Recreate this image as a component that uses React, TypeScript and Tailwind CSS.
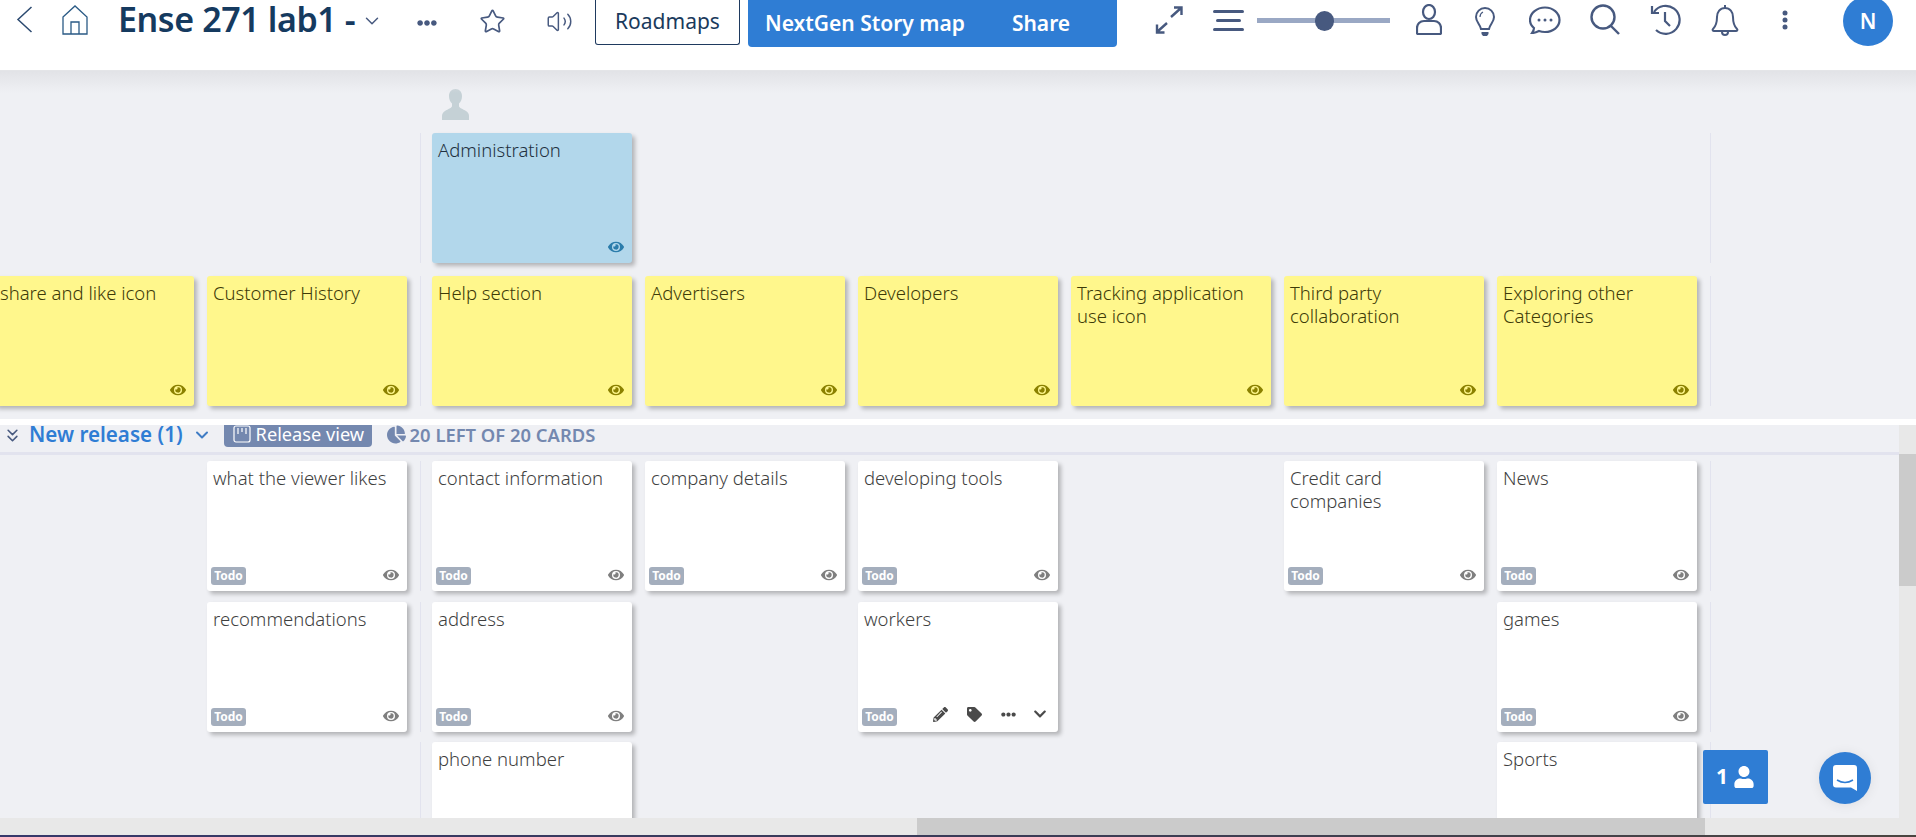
import { ChevronDown, ChevronsDown, Star, Volume2 } from "lucide-react";
import { FaEllipsisH, FaEye, FaPencilAlt, FaTag, FaUser, FaChevronDown, FaChartPie } from "react-icons/fa";

const font = "font-['Noto_Sans','Open_Sans',sans-serif]";

type CardData = { title: string; hovered?: boolean } | null;

function Card({ title, tone, hovered }: { title: string; tone: "blue" | "yellow" | "white"; hovered?: boolean }) {
  const bg = tone === "blue" ? "bg-[#b2d7eb]" : tone === "yellow" ? "bg-[#fff78c]" : "bg-white";
  const eye = tone === "blue" ? "text-[#2b7cab]" : tone === "yellow" ? "text-[#8b8100]" : "text-[#7f7f7f]";
  const ink = tone === "blue" ? "text-[#1f3140]" : tone === "yellow" ? "text-[#3d3a08]" : "text-[#3f3f3f]";
  return (
    <div className={`relative flex h-[130px] w-[200px] shrink-0 flex-col rounded-[3px] pt-[5px] pr-[8px] pl-[6px] shadow-[3px_3px_4px_rgba(0,0,0,0.25)] ${bg}`}>
      <div className={`text-[18.5px] leading-[23px] font-light ${ink}`}>{title}</div>
      {tone === "white" && (
        <div className="absolute bottom-[6px] left-[4px] flex h-[18px] w-[35px] items-center justify-center rounded-[3px] bg-[#a4aebd] text-[12px] font-bold text-white">Todo</div>
      )}
      {hovered ? (
        <div className="absolute right-[11px] bottom-[10px] flex items-center text-[#4a4a4a]">
          <FaPencilAlt className="mr-[19px] text-[15px]" />
          <FaTag className="mr-[19px] text-[15px]" />
          <FaEllipsisH className="mr-[17px] text-[15px]" />
          <FaChevronDown className="text-[14px]" />
        </div>
      ) : (
        <FaEye className={`absolute right-[8px] bottom-[8px] text-[16px] ${eye}`} />
      )}
    </div>
  );
}

function Row({ cards, tone, className = "" }: { cards: CardData[]; tone: "blue" | "yellow" | "white"; className?: string }) {
  const slot = (c: CardData, i: number) =>
    c ? <Card key={i} title={c.title} tone={tone} hovered={c.hovered} /> : <div key={i} className="w-[200px] shrink-0" />;
  return (
    <div className={`ml-[-6px] flex w-max ${className}`}>
      <div className="flex gap-[13px] border-r border-[#e2e3ee] pr-[13px]">{cards.slice(0, 2).map(slot)}</div>
      <div className="flex gap-[13px] border-r border-[#e2e3ee] pr-[13px] pl-[11px]">{cards.slice(2).map((c, i) => slot(c, i + 2))}</div>
    </div>
  );
}

const t = (title: string, hovered?: boolean): CardData => ({ title, hovered });

function TopBar() {
  return (
    <div className="relative z-10 flex h-[71px] shrink-0 items-start border-b border-[#e4e5e8] bg-white text-[#47597f]">
      <svg className="mt-[6px] ml-[16px] h-[27px] w-[17px] text-[#2c4a70]" viewBox="0 0 17 27" fill="none" stroke="currentColor" strokeWidth="1.5">
        <path d="M15.500 1 2 13.500 15.500 26" />
      </svg>
      <svg className="mt-[5px] ml-[29px] h-[30px] w-[26px] text-[#2a5a85]" viewBox="0 0 26 30" fill="none" stroke="currentColor" strokeWidth="1.3">
        <path d="M1 12 13 1l12 11v17H1zM9 29V17h8v12" />
      </svg>
      <div className="ml-[30px] w-[238px] text-[34px] leading-[38px] font-semibold tracking-[-0.4px] whitespace-nowrap text-[#153a5f]">Ense 271 lab1 -</div>
      <ChevronDown className="mt-[10px] ml-[5px] h-[22px] w-[22px] text-[#47597f]" strokeWidth={1.6} />
      <FaEllipsisH className="mt-[13px] ml-[34px] h-[20px] w-[20px]" />
      <Star className="mt-[8px] ml-[42px] h-[27px] w-[27px]" strokeWidth={1.5} />
      <Volume2 className="mt-[8px] ml-[40px] h-[27px] w-[27px]" strokeWidth={1.3} />
      <div className="ml-[22px] flex h-[45px] w-[145px] items-center justify-center rounded-b-[3px] border border-t-0 border-[#1f3a5f] text-[21px] text-[#1a3a5c]">Roadmaps</div>
      <div className="ml-[8px] flex h-[47px] w-[369px] items-center rounded-b-[4px] bg-[#2f7dd4] text-[21px] font-semibold text-white">
        <span className="ml-[17px] whitespace-nowrap">NextGen Story map</span>
        <span className="ml-[47px]">Share</span>
      </div>
      <svg className="mt-[6px] ml-[38px] h-[28px] w-[28px]" viewBox="0 0 28 28" fill="none" stroke="currentColor" strokeWidth="2.4">
        <path d="M16 11 26 2M19 1.500h7.500V9M12 17 2 26M2 18.500V26.500h7.500" />
      </svg>
      <div className="mt-[10px] ml-[30px] flex w-[31px] flex-col items-stretch gap-[6px]">
        <div className="h-[3px] rounded bg-[#47597f]" />
        <div className="mx-[3px] h-[3px] rounded bg-[#47597f]" />
        <div className="h-[3px] rounded bg-[#47597f]" />
      </div>
      <div className="relative mt-[18px] ml-[13px] h-[5px] w-[133px] bg-[#9aa8c4]">
        <div className="absolute top-[-7px] left-[58px] h-[20px] w-[19px] rounded-full bg-[#47597f]" />
      </div>
      <svg className="mt-[4px] ml-[26px] h-[31px] w-[26px]" viewBox="0 0 26 31" fill="none" stroke="currentColor" strokeWidth="2.2">
        <ellipse cx="13" cy="8" rx="6" ry="7" />
        <path d="M8 17h10c4 0 7 3 7 7v5a1 1 0 0 1-1 1H2a1 1 0 0 1-1-1v-5c0-4 3-7 7-7z" />
      </svg>
      <svg className="mt-[7px] ml-[33px] h-[29px] w-[20px]" viewBox="0 0 20 29" fill="none" stroke="currentColor" strokeWidth="2">
        <path d="M6 22C5 17 1 15 1 10a9 9 0 0 1 18 0c0 5-4 7-5 12z" />
        <path d="M8 5c-2 1-3 3-3 5" strokeWidth="1.2" />
        <path d="M6.500 25h7v2l-1.500 2H8l-1.500-2z" fill="currentColor" stroke="none" />
      </svg>
      <svg className="mt-[6px] ml-[34px] h-[28px] w-[32px]" viewBox="0 0 32 28" fill="none" stroke="currentColor" strokeWidth="2.2">
        <path d="M16 1.500c8 0 14.500 5.500 14.500 12.500S24 26 16 26c-2 0-4-.3-6-1-2 1-4 2-7 2 1-1.500 2-3 2-5-2.500-2-4-5-4-8C1 7 8 1.500 16 1.500z" />
        <circle cx="10" cy="14" r="1.500" fill="currentColor" stroke="none" />
        <circle cx="16" cy="14" r="1.500" fill="currentColor" stroke="none" />
        <circle cx="22" cy="14" r="1.500" fill="currentColor" stroke="none" />
      </svg>
      <svg className="mt-[4px] ml-[29px] h-[31px] w-[31px]" viewBox="0 0 31 31" fill="none" stroke="currentColor" strokeWidth="2.400">
        <ellipse cx="13" cy="13" rx="11.500" ry="11.500" />
        <path d="m21 22 8 8" />
      </svg>
      <svg className="mt-[4px] ml-[29px] h-[32px] w-[31px]" viewBox="0 0 31 32" fill="none" stroke="currentColor" strokeWidth="2.200">
        <path d="M4 8A14 14 0 1 1 6 26" />
        <path d="M2 2v7h7M15 8v9l5 5" />
      </svg>
      <svg className="mt-[4px] ml-[30px] h-[32px] w-[28px]" viewBox="0 0 28 32" fill="none" stroke="currentColor" strokeWidth="2">
        <path d="M14 1v3M14 4c-5 0-8 4-8 9 0 6-1 9-4 12-1 1 0 2 1 2h22c1 0 2-1 1-2-3-3-4-6-4-12 0-5-3-9-8-9zM11 28c0 2 1 3 3 3s3-1 3-3" />
      </svg>
      <svg className="mt-[10px] ml-[43px] h-[20px] w-[6px]" viewBox="0 0 6 20" fill="currentColor">
        <circle cx="3" cy="3" r="2.500" />
        <circle cx="3" cy="10" r="2.500" />
        <circle cx="3" cy="17" r="2.500" />
      </svg>
      <div className="mt-[-4px] ml-[55px] flex h-[50px] w-[50px] shrink-0 items-center justify-center rounded-full bg-[#2f7dd4] pt-[2px] text-[21px] font-semibold text-white">N</div>
    </div>
  );
}

function Scrollbar() {
  return (
    <div className="flex h-[17px] shrink-0 bg-[#e8e8e8]">
      <div className="ml-[917px] h-full w-[788px] bg-[#cbcbcb]" />
    </div>
  );
}

export default function App() {
  return (
    <div className={`relative flex h-[837px] w-[1916px] flex-col overflow-hidden bg-[#eff0f4] ${font}`}>
      <TopBar />
      <div className="pointer-events-none absolute top-[71px] left-0 z-[1] h-[22px] w-full bg-gradient-to-b from-[#e2e3e7] to-transparent" />

      <div className="flex h-[348px] shrink-0 flex-col overflow-hidden">
        <div className="relative">
          <Row tone="blue" className="pt-[62px] pb-[13px]" cards={[null, null, t("Administration"), null, null, null, null, null]} />
          <svg className="absolute top-[18px] left-[442px] h-[31px] w-[27px] text-[#c5d1d6]" viewBox="0 0 27 31" fill="currentColor">
            <path d="M13.500 0c4 0 6.500 3 6.500 7 0 3-1 5.500-3 7.500v2.500c0 2 4 3 7 5 2 1 3 3 3 5v4H0v-4c0-2 1-4 3-5 3-2 7-3 7-5v-2.500C8 12.500 7 10 7 7c0-4 2.500-7 6.500-7z" />
          </svg>
        </div>
        <Row
          tone="yellow"
          className="pb-[13px]"
          cards={[t("share and like icon"), t("Customer History"), t("Help section"), t("Advertisers"), t("Developers"), t("Tracking application use icon"), t("Third party collaboration"), t("Exploring other Categories")]}
        />
      </div>

      <div className="h-[6px] shrink-0 bg-white" />

      <div className="flex min-h-0 flex-1">
        <div className="flex min-w-0 flex-1 flex-col overflow-hidden">
          <div className="flex h-[30px] shrink-0 items-start border-b-[3px] border-[#e2e3ee]">
            <ChevronsDown className="ml-[2px] h-[21px] w-[21px] text-[#47597f]" strokeWidth={1.8} />
            <div className="ml-[6px] text-[20.6px] leading-[18px] font-semibold whitespace-nowrap text-[#2f7dd4]">New release (1)</div>
            <ChevronDown className="ml-[9px] h-[20px] w-[20px] text-[#3f7cc4]" strokeWidth={2.4} />
            <div className="ml-[12px] flex h-[22px] w-[148px] items-start rounded-b-[4px] bg-[#7488af] text-[18.2px] leading-[19px] whitespace-nowrap text-white">
              <svg className="ml-[9px] h-[18px] w-[18px] shrink-0" viewBox="0 0 18 18" fill="none" stroke="currentColor" strokeWidth="1.2">
                <rect x="1" y="1" width="16" height="16" rx="2" />
                <path d="M5 3v6M9 3v4M13 3v6" />
              </svg>
              <span className="ml-[5px]">Release view</span>
            </div>
            <FaChartPie className="ml-[15px] h-[19px] w-[19px] text-[#7488af]" />
            <div className="ml-[4px] text-[18.4px] leading-[19px] font-semibold whitespace-nowrap text-[#7488af]">20 LEFT OF 20 CARDS</div>
          </div>
          <div className="flex-1 overflow-hidden pt-[6px]">
            <Row tone="white" className="pb-[10.5px]" cards={[null, t("what the viewer likes"), t("contact information"), t("company details"), t("developing tools"), null, t("Credit card companies"), t("News")]} />
            <Row tone="white" className="pb-[10.5px]" cards={[null, t("recommendations"), t("address"), null, t("workers", true), null, null, t("games")]} />
            <Row tone="white" cards={[null, null, t("phone number"), null, null, null, null, t("Sports")]} />
          </div>
        </div>
        <div className="w-[17px] shrink-0 bg-[#e8e8e8] pt-[29px]">
          <div className="h-[132px] bg-[#cbcbcb]" />
        </div>
      </div>

      <Scrollbar />
      <div className="h-[2px] shrink-0 bg-gradient-to-r from-[#37386b] via-[#3a3b58] to-[#4a4540]" />

      <div className="absolute top-[750px] left-[1703px] flex h-[54px] w-[65px] items-center justify-center gap-[5px] rounded-[2px] bg-[#2f7dd4] text-[21px] font-bold text-white">
        1<FaUser className="h-[22px] w-[22px]" />
      </div>
      <div className="absolute top-[752px] left-[1819px] flex h-[52px] w-[52px] items-center justify-center rounded-full bg-[#2f7dd4] shadow-[0_1px_12px_rgba(0,0,0,0.08)]">
        <svg className="h-[26px] w-[24px]" viewBox="0 0 24 26" fill="white">
          <path d="M3 0h18a3 3 0 0 1 3 3v23l-6-3.500H3a3 3 0 0 1-3-3V3a3 3 0 0 1 3-3z" />
          <path d="M4 15c5 3 11 3 16 0" fill="none" stroke="#2f7dd4" strokeWidth="1.500" />
        </svg>
      </div>
    </div>
  );
}
